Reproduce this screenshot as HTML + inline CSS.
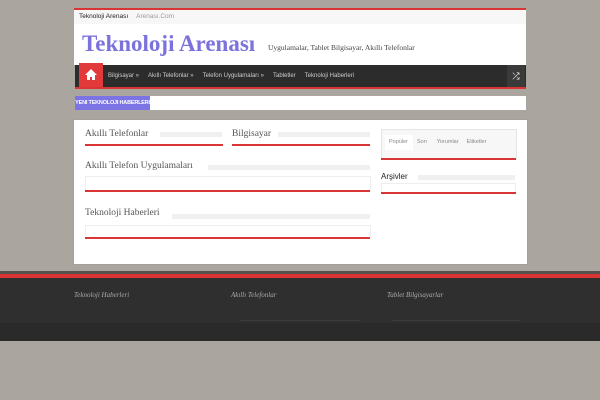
<!DOCTYPE html>
<html><head><style>
body{margin:0;width:600px;height:400px;background:#aaa59e;font-family:"Liberation Sans",sans-serif;position:relative;overflow:hidden}
.a{position:absolute;white-space:nowrap}
.bar{background:#f0f0f0}
.red{background:#d93535}
</style></head><body>
<div class="a" style="left:74px;top:8px;width:452px;height:2px;background:#d93535"></div>
<div class="a" style="left:74px;top:10px;width:452px;height:14px;background:#f7f7f7;font-size:6.5px;line-height:14px">
<span style="margin-left:5px;color:#222">Teknoloji Arenası</span><span style="margin-left:8px;color:#999">Arenası.Com</span></div>
<div class="a" style="left:74px;top:24px;width:452px;height:41px;background:#fff"></div>
<div class="a" style="left:82px;top:30px;font-family:'Liberation Serif',serif;font-weight:bold;font-size:23px;color:#7c72dc;line-height:28px">Teknoloji Arenası</div>
<div class="a" style="left:268px;top:43px;font-family:'Liberation Serif',serif;font-size:7.5px;color:#444">Uygulamalar, Tablet Bilgisayar, Akıllı Telefonlar</div>
<div class="a" style="left:75px;top:65px;width:451px;height:22px;background:#2c2c2c"></div>
<div class="a" style="left:79px;top:63px;width:24px;height:24px;background:#e23a3a"></div>
<svg class="a" style="left:84px;top:68px" width="14" height="13" viewBox="0 0 14 13"><path d="M7 1L1 7h2v5h3V9h2v3h3V7h2z" fill="#fff"/></svg>
<div class="a" style="left:108px;top:65px;height:22px;line-height:22px;font-size:6px;color:#ccc">
<span>Bilgisayar »</span><span style="margin-left:9px">Akıllı Telefonlar »</span><span style="margin-left:9px">Telefon Uygulamaları »</span><span style="margin-left:9px">Tabletler</span><span style="margin-left:9px">Teknoloji Haberleri</span></div>
<div class="a" style="left:507px;top:65px;width:18px;height:22px;background:#3a3a3a;color:#fff;font-size:9px;line-height:22px;text-align:center">⤮</div>
<div class="a" style="left:75px;top:87px;width:451px;height:2px;background:#d93535"></div>
<div class="a" style="left:75px;top:96px;width:451px;height:14px;background:#fff"></div>
<div class="a" style="left:75px;top:96px;width:75px;height:14px;background:#7c74e4;color:#fff;font-size:5.5px;font-weight:bold;line-height:14px;text-align:center;letter-spacing:-0.2px">YENI TEKNOLOJI HABERLERI</div>
<div class="a" style="left:74px;top:120px;width:453px;height:144px;background:#fff;box-shadow:0 0 1px #888"></div>
<div class="a" style="left:85px;top:129px;font-family:'Liberation Serif',serif;font-size:9.5px;color:#555">Akıllı Telefonlar</div>
<div class="a bar" style="left:160px;top:132px;width:62px;height:5px"></div>
<div class="a red" style="left:85px;top:144px;width:138px;height:2px"></div>
<div class="a" style="left:232px;top:129px;font-family:'Liberation Serif',serif;font-size:9.5px;color:#555">Bilgisayar</div>
<div class="a bar" style="left:278px;top:132px;width:92px;height:5px"></div>
<div class="a red" style="left:232px;top:144px;width:138px;height:2px"></div>
<div class="a" style="left:85px;top:161px;font-family:'Liberation Serif',serif;font-size:9.5px;color:#555">Akıllı Telefon Uygulamaları</div>
<div class="a bar" style="left:208px;top:165px;width:162px;height:5px"></div>
<div class="a" style="left:85px;top:176px;width:284px;height:13px;border:1px solid #eee;border-bottom:none"></div>
<div class="a red" style="left:85px;top:190px;width:285px;height:2px"></div>
<div class="a" style="left:85px;top:208px;font-family:'Liberation Serif',serif;font-size:9.5px;color:#555">Teknoloji Haberleri</div>
<div class="a bar" style="left:172px;top:214px;width:198px;height:5px"></div>
<div class="a" style="left:85px;top:225px;width:284px;height:11px;border:1px solid #eee;border-bottom:none"></div>
<div class="a red" style="left:85px;top:237px;width:285px;height:2px"></div>
<div class="a" style="left:381px;top:129px;width:134px;height:28px;background:#f7f7f7;border:1px solid #e5e5e5"></div>
<div class="a" style="left:385px;top:135px;width:28px;height:15px;background:#fff"></div>
<div class="a" style="left:389px;top:135px;line-height:15px;font-size:5.5px;color:#888">Popüler<span style="margin-left:9px">Son</span><span style="margin-left:10px">Yorumlar</span><span style="margin-left:8px">Etiketler</span></div>
<div class="a red" style="left:381px;top:158px;width:135px;height:2px"></div>
<div class="a" style="left:381px;top:172px;font-size:8px;color:#222">Arşivler</div>
<div class="a bar" style="left:418px;top:175px;width:97px;height:5px"></div>
<div class="a" style="left:381px;top:183px;width:133px;height:8px;border:1px solid #eee;border-bottom:none"></div>
<div class="a red" style="left:381px;top:192px;width:135px;height:2px"></div>
<div class="a" style="left:0;top:271px;width:600px;height:4px;background:#58504c"></div>
<div class="a" style="left:0;top:274px;width:600px;height:4px;background:#d93535"></div>
<div class="a" style="left:0;top:278px;width:600px;height:63px;background:#2f2f30"></div>
<div class="a" style="left:0;top:323px;width:600px;height:18px;background:#2a2a2b"></div>
<div class="a" style="left:74px;top:291px;font-family:'Liberation Serif',serif;font-style:italic;font-size:7px;color:#aaa">Teknoloji Haberleri</div>
<div class="a" style="left:231px;top:291px;font-family:'Liberation Serif',serif;font-style:italic;font-size:7px;color:#aaa">Akıllı Telefonlar</div>
<div class="a" style="left:387px;top:291px;font-family:'Liberation Serif',serif;font-style:italic;font-size:7px;color:#aaa">Tablet Bilgisayarlar</div>
<div class="a" style="left:240px;top:320px;width:120px;height:1px;background:#3c3c3c"></div>
<div class="a" style="left:392px;top:320px;width:128px;height:1px;background:#3c3c3c"></div>
</body></html>
